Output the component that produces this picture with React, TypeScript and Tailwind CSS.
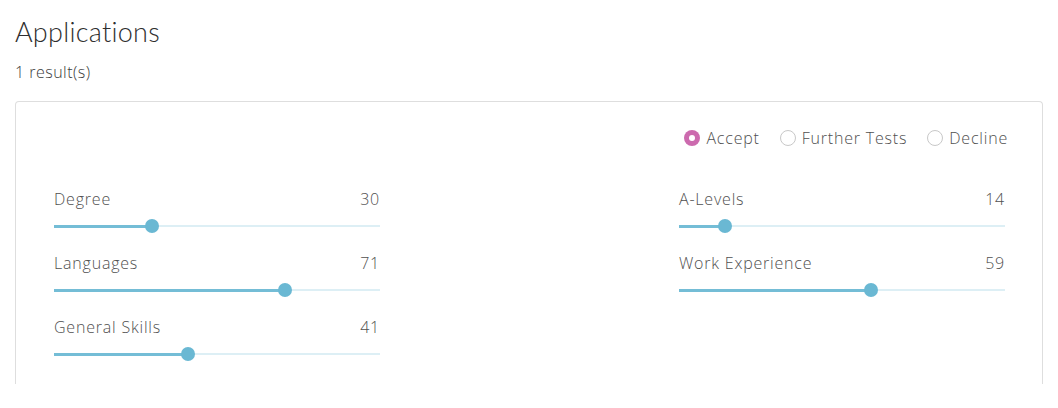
import { useState } from 'react';

interface Score {
  label: string;
  value: number;
}

const LEFT: Score[] = [
  { label: 'Degree', value: 30 },
  { label: 'Languages', value: 71 },
  { label: 'General Skills', value: 41 },
];

const RIGHT: Score[] = [
  { label: 'A-Levels', value: 14 },
  { label: 'Work Experience', value: 59 },
];

const OPTIONS = ['Accept', 'Further Tests', 'Decline'];

const ScoreSlider = ({ label, value }: Score) => (
  <div className="flex flex-col">
    <div className="flex justify-between items-center h-6 text-[16px] tracking-[0.05em] text-[#505050]">
      <span>{label}</span>
      <span>{value}</span>
    </div>
    <div className="relative h-[14px] mt-2 flex items-center">
      <div className="w-full h-[2px] bg-[#ddeff5]" />
      <div className="absolute left-0 h-[3px] bg-[#74bdd6]" style={{ width: `${value}%` }} />
      <div
        className="absolute w-[14px] h-[14px] -ml-[7px] rounded-full bg-[#6ab8d3]"
        style={{ left: `${value}%` }}
      />
    </div>
  </div>
);

const App = () => {
  const [decision, setDecision] = useState('Accept');

  return (
    <div className="w-[1058px] h-[408px] bg-white px-[15px] pt-[16px] font-['Open_Sans','Liberation_Sans',sans-serif] font-light overflow-hidden">
      <h1 className="font-['Lato',sans-serif] text-[27px] leading-8 text-[#2e2e2e] font-light tracking-[0.01em]">Applications</h1>
      <p className="mt-[14px] text-[16px] leading-5 text-[#3a3a3a] tracking-[0.03em]">1 result(s)</p>

      {/* Card */}
      <div className="mt-[19px] h-[283px] border-x border-t border-[#dedede] rounded-t-[4px] pl-[38px] pr-[34px] pt-[26px]">
        <div className="flex justify-end items-center h-5 gap-[20px] text-[16px] tracking-[0.05em] text-[#505050]">
          {OPTIONS.map(opt => (
            <label key={opt} className="flex items-center gap-[6px] cursor-pointer" onClick={() => setDecision(opt)}>
              {decision === opt ? (
                <span className="w-4 h-4 rounded-full bg-[#cc6aae] flex items-center justify-center">
                  <span className="w-[6px] h-[6px] rounded-full bg-white" />
                </span>
              ) : (
                <span className="w-4 h-4 rounded-full border border-[#c8c8c8] bg-white" />
              )}
              <span>{opt}</span>
            </label>
          ))}
        </div>

        <div className="mt-[39px] mr-[3px] grid grid-cols-[326px_326px] justify-between">
          <div className="flex flex-col gap-[18px]">
            {LEFT.map(s => <ScoreSlider key={s.label} {...s} />)}
          </div>
          <div className="flex flex-col gap-[18px]">
            {RIGHT.map(s => <ScoreSlider key={s.label} {...s} />)}
          </div>
        </div>
      </div>
    </div>
  );
};

export default App;
